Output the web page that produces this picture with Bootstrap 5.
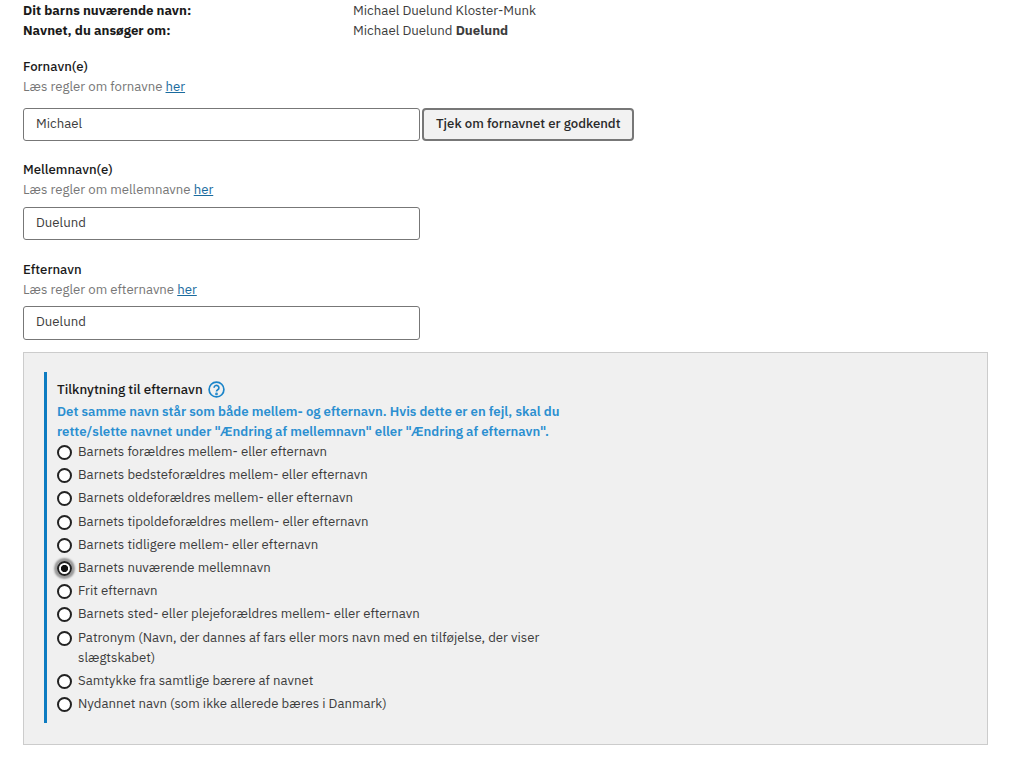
<!doctype html>
<html lang="da"><head><meta charset="utf-8">
<link rel="stylesheet" href="https://cdn.jsdelivr.net/npm/bootstrap@5.3.0/dist/css/bootstrap.min.css">
<style>
html,body{height:757px;overflow:hidden}
body{font-family:"IBM Plex Sans","Open Sans","Noto Sans",sans-serif;font-size:13.2px;color:#3d3d3d;background:#fff}
.wrap{padding:0 36px 0 23px}
.sumrow{height:20px;line-height:20px;font-size:13.28px}
.sumlab{width:330px;font-weight:700;color:#1a1a1a}
.fld{margin-bottom:19px}
.fld-first{margin-bottom:18px}
.lab{font-weight:500;line-height:20px;color:#1a1a1a}
.hint{line-height:20px;color:#777;margin-bottom:8px}
.hint-last{margin-bottom:7px}
.hint-first{margin-bottom:12px}
.hint a{color:#1a6b9e}
.inprow{display:flex;gap:2px}
.inp{width:397px;height:33px;border:1px solid #777;border-radius:3px;font-size:13.2px;padding:0 12px 3px;color:#3d3d3d}
.inp-tall{height:34px;padding-bottom:4px}
.chk{height:33px;font-size:13.2px;font-weight:500;background:#f2f2f2;border:2px solid #777;border-radius:4px;padding:0 12px 2px;color:#2a2a2a;white-space:nowrap}
.panel{background:#f0f0f0;border:1px solid #ccc;margin-top:-7px;padding:19px 20px 20px;height:393px}
.inner{border-left:3px solid #0e7cc1;padding-left:10px;width:530px;height:351px}
.ttl{font-weight:500;font-size:13.4px;line-height:20px;padding-top:7px;padding-bottom:2px;box-sizing:content-box;color:#1a1a1a}
.warn{color:#2b8fd0;font-weight:600;line-height:20px}
.opt{display:flex;gap:6px;line-height:20px;margin-bottom:3.2px}
.opt i{flex:none;width:15px;height:15px;border:2px solid #222;border-radius:50%;background:#fff;margin-top:4px}
.opt i.on{box-shadow:0 0 2px 3px #999;background:radial-gradient(circle,#111 0 3.3px,#fff 3.9px)}
.qmark{margin-left:1px}
</style></head><body>
<div class="wrap">
<div class="sumrow d-flex"><div class="sumlab">Dit barns nuværende navn:</div><div>Michael Duelund Kloster-Munk</div></div>
<div class="sumrow d-flex mb-3"><div class="sumlab">Navnet, du ansøger om:</div><div>Michael Duelund <b>Duelund</b></div></div>
<div class="fld-first"><div class="lab">Fornavn(e)</div><div class="hint hint-first">Læs regler om fornavne <a href="#">her</a></div>
<div class="inprow"><input class="inp" value="Michael"><button class="chk">Tjek om fornavnet er godkendt</button></div></div>
<div class="fld"><div class="lab">Mellemnavn(e)</div><div class="hint">Læs regler om mellemnavne <a href="#">her</a></div><input class="inp" value="Duelund"></div>
<div class="fld"><div class="lab">Efternavn</div><div class="hint hint-last">Læs regler om efternavne <a href="#">her</a></div><input class="inp inp-tall" value="Duelund"></div>
<div class="panel"><div class="inner">
<div class="ttl d-flex align-items-center gap-1">Tilknytning til efternavn <svg class="qmark" width="17" height="17" viewBox="0 0 17 17" fill="none" stroke="#1a84c9" stroke-width="1.7"><circle cx="8.5" cy="8.5" r="7.4"/><path d="M6.1 6.7a2.4 2.4 0 1 1 3.6 2.1c-.8.5-1.2.9-1.2 1.8"/><circle cx="8.5" cy="12.9" r=".5" fill="#1a84c9"/></svg></div>
<div class="warn">Det samme navn står som både mellem- og efternavn. Hvis dette er en fejl, skal du rette/slette navnet under "Ændring af mellemnavn" eller "Ændring af efternavn".</div>
<div class="opt"><i></i><span>Barnets forældres mellem- eller efternavn</span></div>
<div class="opt"><i></i><span>Barnets bedsteforældres mellem- eller efternavn</span></div>
<div class="opt"><i></i><span>Barnets oldeforældres mellem- eller efternavn</span></div>
<div class="opt"><i></i><span>Barnets tipoldeforældres mellem- eller efternavn</span></div>
<div class="opt"><i></i><span>Barnets tidligere mellem- eller efternavn</span></div>
<div class="opt"><i class="on"></i><span>Barnets nuværende mellemnavn</span></div>
<div class="opt"><i></i><span>Frit efternavn</span></div>
<div class="opt"><i></i><span>Barnets sted- eller plejeforældres mellem- eller efternavn</span></div>
<div class="opt"><i></i><span>Patronym (Navn, der dannes af fars eller mors navn med en tilføjelse, der viser slægtskabet)</span></div>
<div class="opt"><i></i><span>Samtykke fra samtlige bærere af navnet</span></div>
<div class="opt"><i></i><span>Nydannet navn (som ikke allerede bæres i Danmark)</span></div>
</div></div>
</div>
</body></html>
